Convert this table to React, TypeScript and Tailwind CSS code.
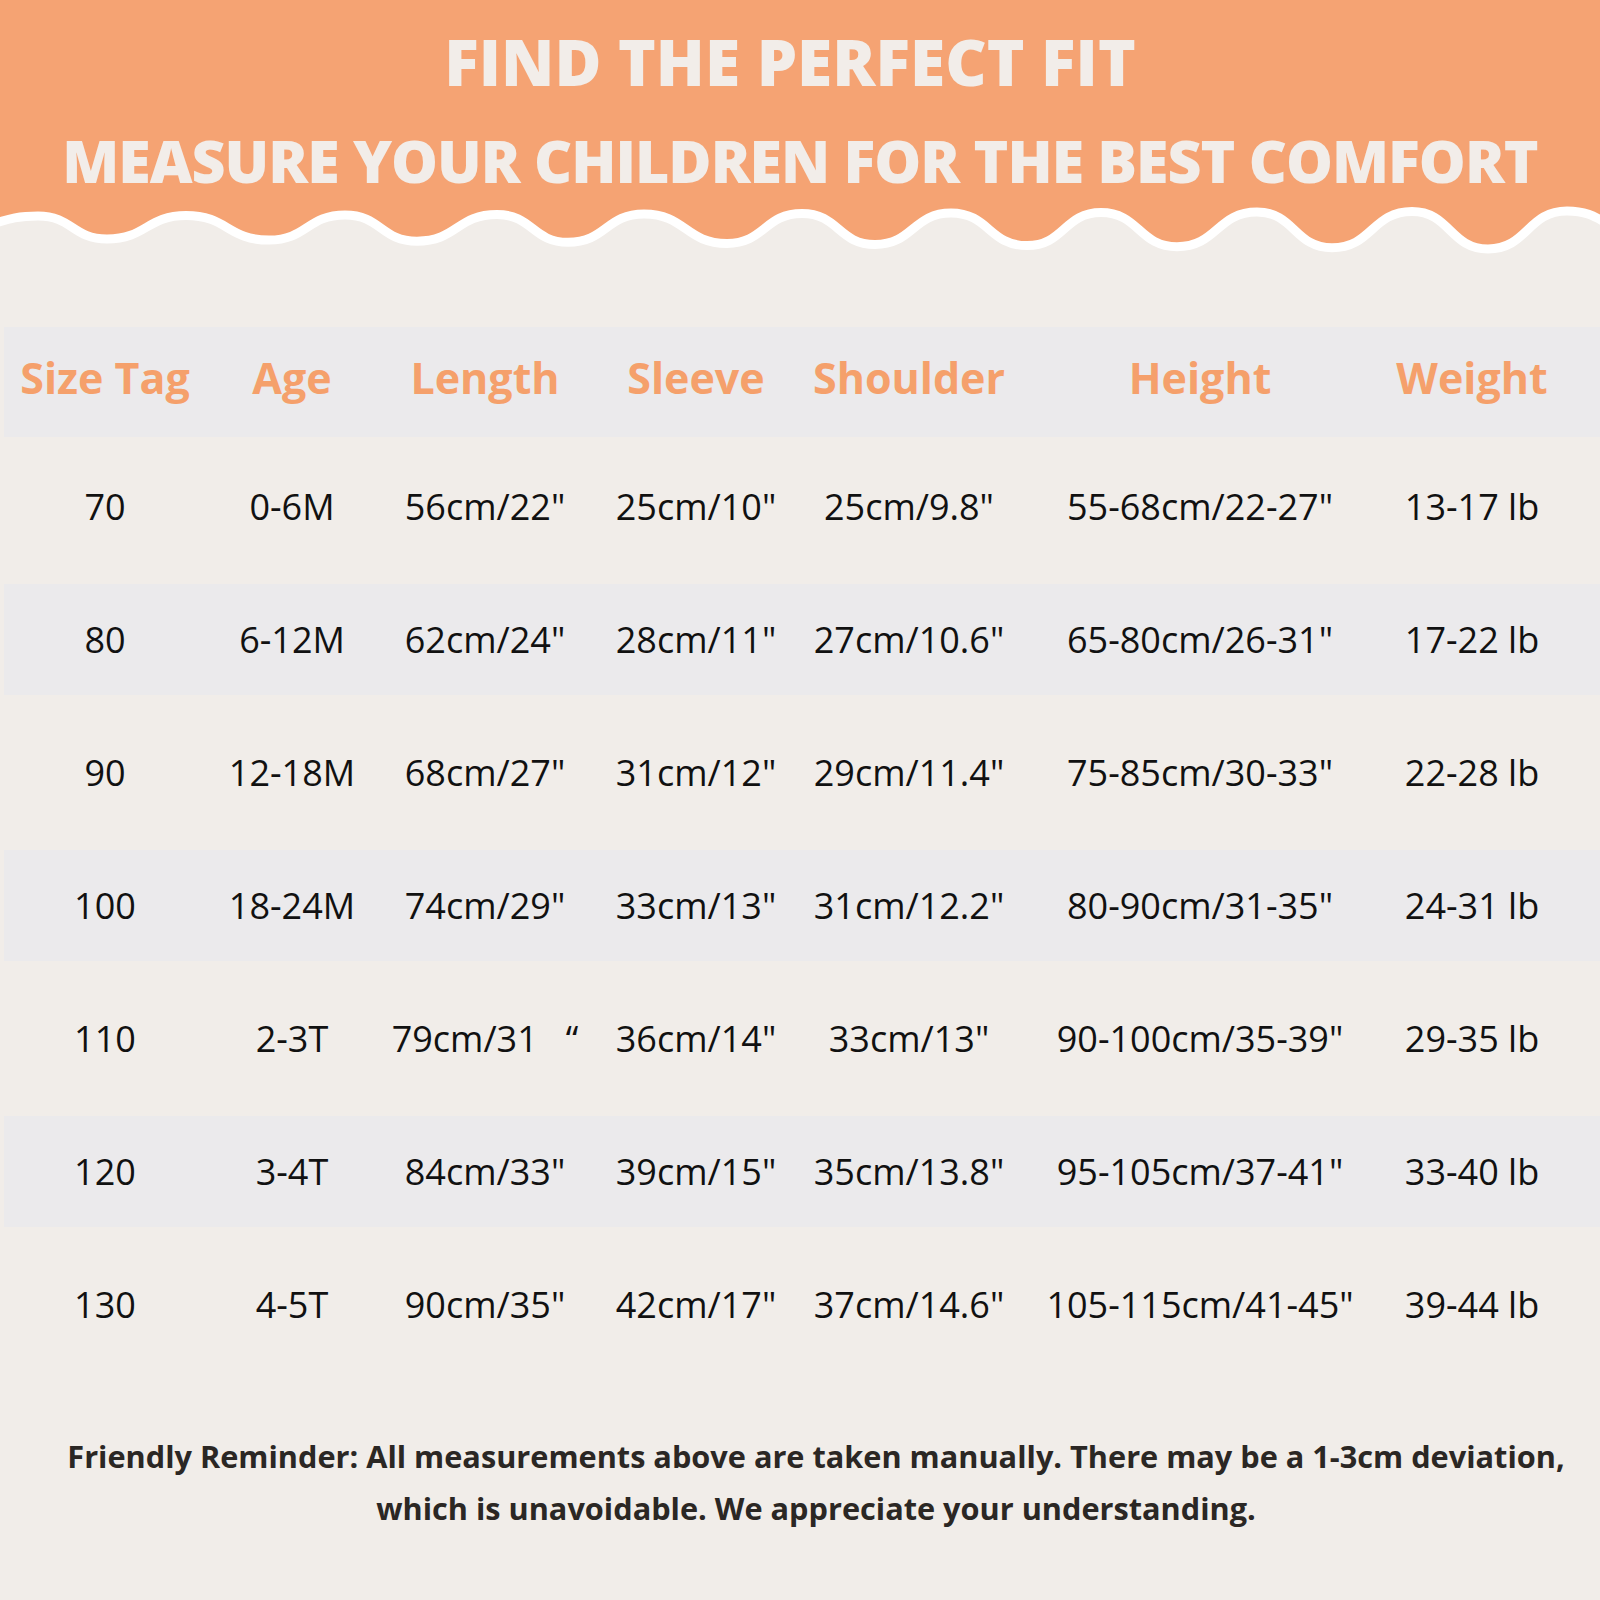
import React from 'react';

const head = ['Size Tag', 'Age', 'Length', 'Sleeve', 'Shoulder', 'Height', 'Weight'];

const rows: string[][] = [
  ['70', '0-6M', '56cm/22"', '25cm/10"', '25cm/9.8"', '55-68cm/22-27"', '13-17 lb'],
  ['80', '6-12M', '62cm/24"', '28cm/11"', '27cm/10.6"', '65-80cm/26-31"', '17-22 lb'],
  ['90', '12-18M', '68cm/27"', '31cm/12"', '29cm/11.4"', '75-85cm/30-33"', '22-28 lb'],
  ['100', '18-24M', '74cm/29"', '33cm/13"', '31cm/12.2"', '80-90cm/31-35"', '24-31 lb'],
  ['110', '2-3T', '79cm/31\u00a0\u00a0\u00a0\u201c', '36cm/14"', '33cm/13"', '90-100cm/35-39"', '29-35 lb'],
  ['120', '3-4T', '84cm/33"', '39cm/15"', '35cm/13.8"', '95-105cm/37-41"', '33-40 lb'],
  ['130', '4-5T', '90cm/35"', '42cm/17"', '37cm/14.6"', '105-115cm/41-45"', '39-44 lb'],
];

// wave extrema along the bottom of the banner
const peaks   = [38, 186, 345, 497, 644, 802, 951, 1101, 1257, 1412, 1567];
const troughs = [107, 269, 417, 568, 727, 875, 1027, 1177, 1332, 1488];

function wavePath() {
  const pts: [number, number][] = [[-40, 228]];
  peaks.forEach((p, i) => {
    pts.push([p, 216 - i * 0.5]);
    if (troughs[i] !== undefined) pts.push([troughs[i], 239 + i * 1.1]);
  });
  pts.push([1640, 232]);
  let d = `M${pts[0][0]},${pts[0][1]}`;
  for (let i = 1; i < pts.length; i++) {
    const [x0, y0] = pts[i - 1];
    const [x1, y1] = pts[i];
    const k = (x1 - x0) * 0.5;
    d += ` C${x0 + k},${y0} ${x1 - k},${y1} ${x1},${y1}`;
  }
  return d;
}

const GRID = 'grid grid-cols-[202px_172px_214px_208px_218px_364px_180px] items-center text-center';

export default function App() {
  const d = wavePath();
  return (
    <div className="w-[1600px] h-[1600px] overflow-hidden bg-[#f1ede9]"
         style={{ fontFamily: '"Open Sans", "Noto Sans", sans-serif' }}>

      {/* Banner */}
      <div className="h-[200px] bg-[#f5a373] flex flex-col items-center text-[#f2ede9] font-extrabold uppercase">
        <p className="mt-[20px] mr-[20px] text-[64px] leading-[84px]">Find the perfect fit</p>
        <p className="mt-[14px] text-[59px] leading-[84px] tracking-[-1px]">Measure your children for the best comfort</p>
      </div>
      <svg width="1600" height="60" viewBox="0 200 1600 60" className="block">
        <path d={`${d} L1640,190 L-40,190 Z`} fill="#f5a373" />
        <path d={d} fill="none" stroke="#ffffff" strokeWidth="9" />
      </svg>

      {/* Table */}
      <div className="mt-[67px]">
        <div className={`${GRID} h-[110px] pb-[8px] ml-[4px] bg-[#ebeaec] text-[#f5a06b] font-bold text-[43px]`}>
          {head.map(h => <div key={h}>{h}</div>)}
        </div>
        <div className="mt-[3px]">
          {rows.map((r, i) => (
            <div key={r[0]} className="h-[133px] py-[11px]">
              <div className={`${GRID} h-full ml-[4px] text-[36px] text-[#111111] ${i % 2 === 1 ? 'bg-[#ebeaec]' : ''}`}>
                {r.map((c, j) => <div key={j} className="whitespace-nowrap">{c}</div>)}
              </div>
            </div>
          ))}
        </div>
      </div>

      {/* Reminder */}
      <div className="mt-[59px] pl-[32px] text-center text-[30.7px] leading-[52px] font-bold text-[#2b2724]">
        <p>Friendly Reminder: All measurements above are taken manually. There may be a 1-3cm deviation,</p>
        <p>which is unavoidable. We appreciate your understanding.</p>
      </div>
    </div>
  );
}
